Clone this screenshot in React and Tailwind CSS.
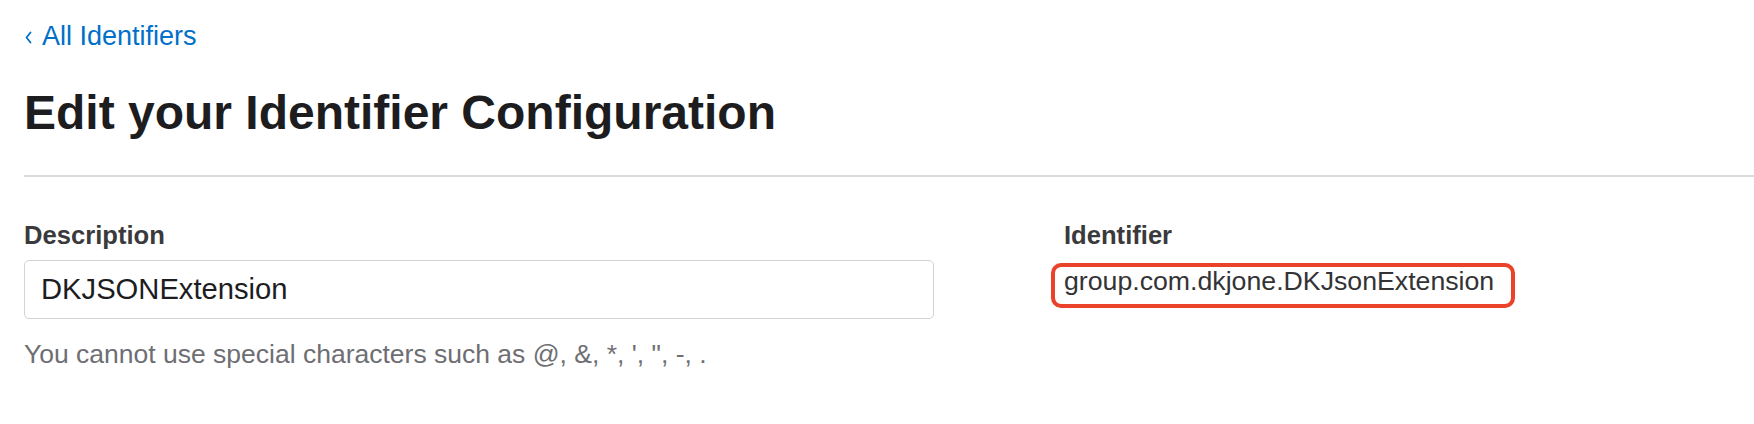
import React from "react";

function BackLink() {
  return (
    <a
      href="#"
      className="flex items-center text-[27px] leading-[32px] text-[#0070c9]"
    >
      <svg
        width="7"
        height="13"
        viewBox="0 0 7 13"
        className="ml-[1px] mr-[10px] mt-[2px]"
        fill="none"
        stroke="currentColor"
        strokeWidth="1.8"
        strokeLinecap="round"
        strokeLinejoin="round"
      >
        <path d="M5.5 1.5 L1.5 6.5 L5.5 11.5" />
      </svg>
      All Identifiers
    </a>
  );
}

export default function App() {
  return (
    <div
      className="min-h-screen bg-white pl-[24px] pt-[20px]"
      style={{ fontFamily: '"Liberation Sans", Arial, sans-serif' }}
    >
      <BackLink />

      <h1 className="mt-[33px] text-[48px] leading-[56px] font-bold text-[#1d1d1f]">
        Edit your Identifier Configuration
      </h1>

      <div className="mt-[34px] h-[2px] bg-[#dcdcdc]" />

      <div className="mt-[42px] grid grid-cols-[910px_1fr] gap-[130px]">
        <div>
          <div className="text-[25.6px] leading-[32px] font-bold text-[#3a3a3c]">
            Description
          </div>
          <input
            type="text"
            defaultValue="DKJSONExtension"
            className="mt-[9px] block w-full h-[59px] rounded-[5px] border-[1.5px] border-[#d2d2d7] bg-white pl-[16px] text-[29.2px] text-[#1d1d1f] outline-none"
            style={{ fontFamily: '"Liberation Sans", Arial, sans-serif' }}
          />
          <p className="mt-[19px] text-[26.5px] leading-[32px] text-[#6e6e73]">
            You cannot use special characters such as @, &amp;, *, ', ", -, .
          </p>
        </div>

        <div>
          <div className="text-[25.6px] leading-[32px] font-bold text-[#3a3a3c]">
            Identifier
          </div>
          <span className="mt-[12px] -ml-[13px] inline-block rounded-[10px] border-[4px] border-[#ea4329] pl-[9px] pr-[17px] pt-[1px] pb-[10px] text-[26.7px] leading-[26px] text-[#333336]">
            group.com.dkjone.DKJsonExtension
          </span>
        </div>
      </div>
    </div>
  );
}
